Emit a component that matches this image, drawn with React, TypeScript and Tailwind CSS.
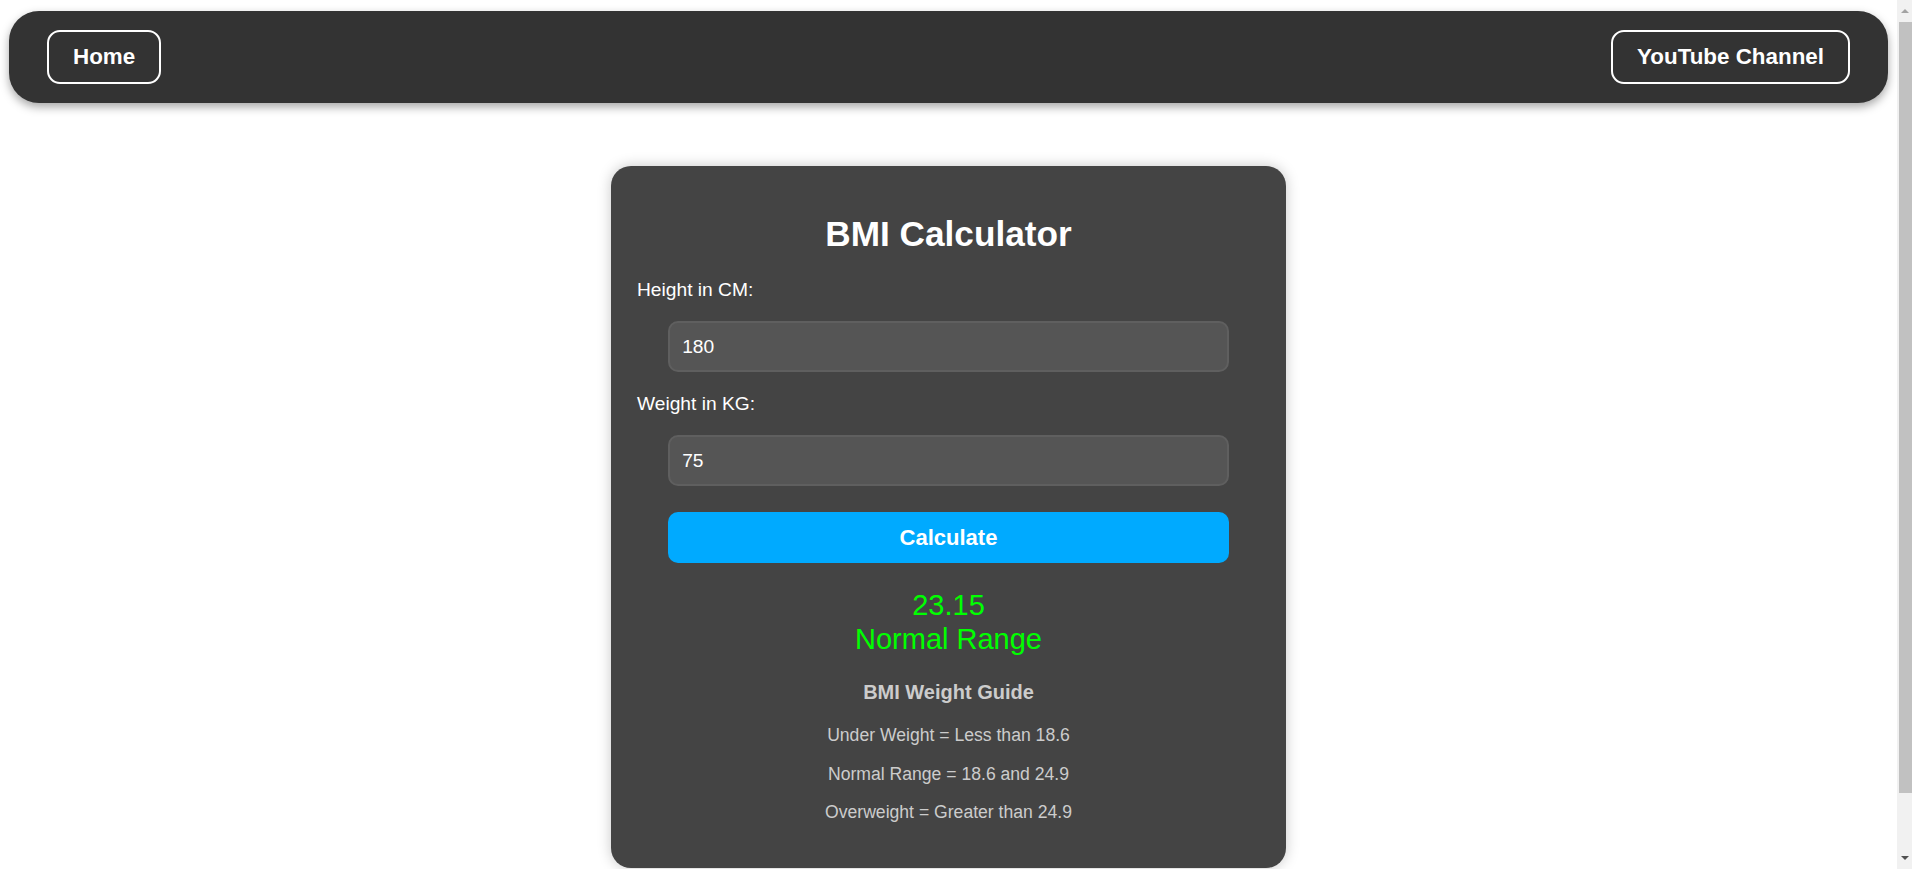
const font = { fontFamily: '"Liberation Sans", Arial, sans-serif' }

function NavButton({ label }: { label: string }) {
  return (
    <a
      href="#"
      className="block h-[54px] rounded-[13px] border-2 border-white px-[24px] text-[22.4px] font-bold leading-[50px] text-white"
    >
      {label}
    </a>
  )
}

function Field({ label, value, first }: { label: string; value: string; first?: boolean }) {
  return (
    <>
      <label className={`block text-[19.2px] leading-[22px] text-white ${first ? 'mt-[25px]' : 'mt-[21px]'}`}>{label}</label>
      <input
        type="text"
        defaultValue={value}
        className="mx-auto mt-[20px] block h-[51px] w-[90%] rounded-[10px] border-2 border-[#5f5f5f] bg-[#555555] px-[12px] text-[19.2px] text-white outline-none"
      />
    </>
  )
}

// page scrollbar as it shows in the screenshot
function ScrollBar() {
  return (
    <div className="flex w-[15px] shrink-0 flex-col bg-[#f1f1f1]">
      <div className="flex h-[22px] items-center justify-center">
        <div className="h-0 w-0 border-x-[4px] border-b-[4px] border-x-transparent border-b-[#a3a3a3]" />
      </div>
      <div className="ml-[2px] h-[771px] bg-[#c1c1c1]" />
      <div className="flex-1" />
      <div className="flex h-[22px] items-center justify-center">
        <div className="h-0 w-0 border-x-[4px] border-t-[4px] border-x-transparent border-t-[#505050]" />
      </div>
    </div>
  )
}

export default function App() {
  return (
    <div style={font} className="flex h-[869px] overflow-hidden bg-white">
      <div className="min-w-0 flex-1 pt-[11px]">
        <nav className="mx-[9px] flex h-[92px] items-center justify-between rounded-[30px] bg-[#333333] px-[38px] shadow-[0_4px_10px_rgba(0,0,0,0.35)]">
          <NavButton label="Home" />
          <NavButton label="YouTube Channel" />
        </nav>

        <div className="mx-auto mt-[63px] w-[675px] rounded-[20px] bg-[#444444] px-[26px] pb-[46px] pt-[26px] shadow-[0_0_14px_rgba(0,0,0,0.22)]">
          <h1 className="mt-[22px] text-center text-[35.2px] font-bold leading-[40px] text-white">BMI Calculator</h1>

          <Field label="Height in CM:" value="180" first />
          <Field label="Weight in KG:" value="75" />

          <button className="mx-auto mt-[26px] block h-[51px] w-[90%] rounded-[10px] bg-[#00aaff] text-[22px] font-bold text-white">
            Calculate
          </button>

          <div className="mt-[25px] text-center text-[29px] leading-[34px] text-[#00ff00]">
            <div>23.15</div>
            <div>Normal Range</div>
          </div>

          <h3 className="mt-[25px] text-center text-[20px] font-bold leading-[23px] text-[#cccccc]">BMI Weight Guide</h3>
          <p className="mt-[21px] text-center text-[17.6px] leading-[20px] text-[#cccccc]">Under Weight = Less than 18.6</p>
          <p className="mt-[18.5px] text-center text-[17.6px] leading-[20px] text-[#cccccc]">Normal Range = 18.6 and 24.9</p>
          <p className="mt-[18.5px] text-center text-[17.6px] leading-[20px] text-[#cccccc]">Overweight = Greater than 24.9</p>
        </div>
      </div>
      <ScrollBar />
    </div>
  )
}
